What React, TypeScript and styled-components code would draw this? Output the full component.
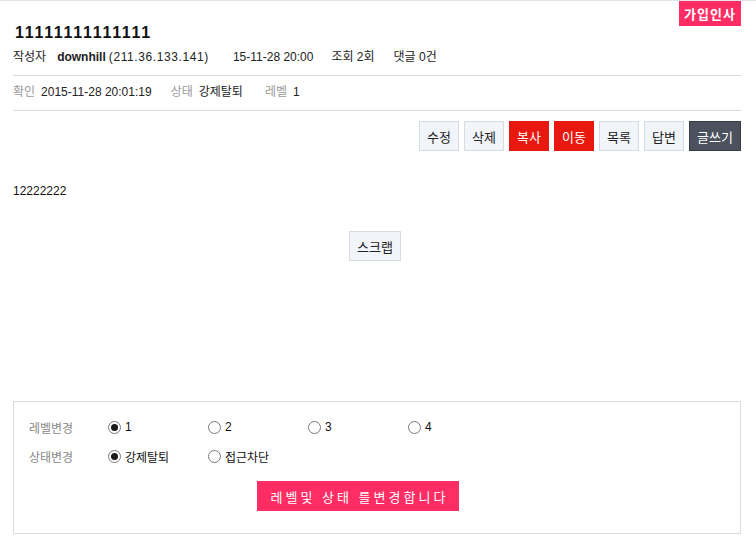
import React from "react";
import styled, { createGlobalStyle } from "styled-components";

const Global = createGlobalStyle`
  html, body { margin: 0; padding: 0; background: #fff; }
  body {
    font-family: "Liberation Sans", "Noto Sans CJK KR", sans-serif;
    font-size: 12px;
    color: #222;
  }
`;

const Page = styled.div`
  border-top: 1px solid #dfe5ec;
  padding: 0 15px 0 13px;
`;

const Header = styled.header`
  position: relative;
  padding: 22px 0 10px;
  border-bottom: 1px solid #dcdcdc;
`;

const Badge = styled.span`
  position: absolute;
  top: 0;
  right: 0;
  width: 62px;
  height: 25px;
  background: #ff2d64;
  color: #fff;
  font-weight: bold;
  font-size: 13px;
  letter-spacing: 1px;
  display: flex;
  align-items: center;
  justify-content: center;
`;

const Title = styled.h1`
  margin: 0 0 6px 2px;
  font-size: 16px;
  line-height: 20px;
  font-weight: bold;
  letter-spacing: 1.7px;
  color: #111;
`;

const MetaLine = styled.div`
  display: flex;
  align-items: center;
  line-height: 16px;
  font-size: 12px;
`;

const MetaItem = styled.span<{ $gap?: number }>`
  margin-right: ${(p) => p.$gap ?? 24}px;
  white-space: nowrap;
  color: #222;
`;

const Strong = styled.b`
  margin: 0 3px 0 11px;
  font-weight: bold;
`;

const Ip = styled.span`
  letter-spacing: 0.6px;
`;

const InfoRow = styled.div`
  display: flex;
  align-items: center;
  line-height: 16px;
  padding: 8px 0 10px;
  border-bottom: 1px solid #dcdcdc;
`;

const InfoLabel = styled.span`
  color: #999;
  margin-right: 6px;
`;

const InfoValue = styled.span<{ $gap?: number }>`
  color: #222;
  margin-right: ${(p) => p.$gap ?? 20}px;
`;

const Toolbar = styled.div`
  display: flex;
  justify-content: flex-end;
  gap: 5px;
  margin-top: 10px;
`;

type Variant = "light" | "red" | "dark";

const Btn = styled.button<{ $variant?: Variant; $w?: number }>`
  height: 30px;
  width: ${(p) => p.$w ?? 40}px;
  padding: 0;
  font-family: inherit;
  font-size: 13px;
  box-sizing: border-box;
  cursor: pointer;
  border: 1px solid
    ${(p) =>
      p.$variant === "red" ? "#e8180e" : p.$variant === "dark" ? "#393e45" : "#d8dcde"};
  background: ${(p) =>
    p.$variant === "red" ? "#e8180e" : p.$variant === "dark" ? "#4b525d" : "#f1f4f8"};
  color: ${(p) => (p.$variant === "light" || !p.$variant ? "#222" : "#fff")};
`;

const Body = styled.div`
  margin-top: 32px;
  line-height: 16px;
  font-size: 12px;
  color: #111;
`;

const ScrapWrap = styled.div`
  display: flex;
  justify-content: center;
  margin-top: 32px;
  padding-right: 4px;
`;

const Box = styled.div`
  margin-top: 140px;
  border: 1px solid #dcdcdc;
  padding: 15px 15px 22px;
  box-sizing: border-box;
`;

const FormRow = styled.div<{ $mt?: number }>`
  display: flex;
  align-items: center;
  height: 20px;
  margin-top: ${(p) => p.$mt ?? 0}px;
`;

const FormLabel = styled.span`
  width: 79px;
  color: #888;
  font-size: 12px;
`;

const Option = styled.label<{ $w?: number }>`
  display: flex;
  align-items: center;
  width: ${(p) => p.$w ?? 100}px;
  font-size: 12px;
  color: #111;
  cursor: pointer;
`;

const Radio = styled.input.attrs({ type: "radio" })`
  appearance: none;
  margin: 0 4px 0 0;
  width: 13px;
  height: 13px;
  border: 1px solid #7a7a7a;
  border-radius: 50%;
  box-sizing: border-box;
  background: #fff;
  display: grid;
  place-items: center;
  &:checked::after {
    content: "";
    width: 7px;
    height: 7px;
    border-radius: 50%;
    background: #1a1a1a;
  }
`;

const SubmitRow = styled.div`
  margin-top: 15px;
  padding-left: 228px;
`;

const Submit = styled.button`
  width: 202px;
  height: 30px;
  border: 0;
  padding: 0 0 0 3px;
  background: #ff2d64;
  color: #fff;
  font-family: inherit;
  font-size: 13px;
  letter-spacing: 3px;
  white-space: nowrap;
  cursor: pointer;
`;

export default function App() {
  return (
    <Page>
      <Global />
      <Header>
        <Badge>가입인사</Badge>
        <Title>11111111111111</Title>
        <MetaLine>
          <MetaItem $gap={24}>
            작성자<Strong>downhill</Strong>
            <Ip>(211.36.133.141)</Ip>
          </MetaItem>
          <MetaItem $gap={18}>15-11-28 20:00</MetaItem>
          <MetaItem $gap={19}>조회 2회</MetaItem>
          <MetaItem>댓글 0건</MetaItem>
        </MetaLine>
      </Header>
      <InfoRow>
        <InfoLabel>확인</InfoLabel>
        <InfoValue $gap={19}>2015-11-28 20:01:19</InfoValue>
        <InfoLabel>상태</InfoLabel>
        <InfoValue $gap={22}>강제탈퇴</InfoValue>
        <InfoLabel>레벨</InfoLabel>
        <InfoValue>1</InfoValue>
      </InfoRow>
      <Toolbar>
        <Btn>수정</Btn>
        <Btn>삭제</Btn>
        <Btn $variant="red">복사</Btn>
        <Btn $variant="red">이동</Btn>
        <Btn>목록</Btn>
        <Btn>답변</Btn>
        <Btn $variant="dark" $w={52}>글쓰기</Btn>
      </Toolbar>
      <Body>12222222</Body>
      <ScrapWrap>
        <Btn $w={52}>스크랩</Btn>
      </ScrapWrap>
      <Box>
        <FormRow>
          <FormLabel>레벨변경</FormLabel>
          {["1", "2", "3", "4"].map((v) => (
            <Option key={v}>
              <Radio name="level" defaultChecked={v === "1"} />
              {v}
            </Option>
          ))}
        </FormRow>
        <FormRow $mt={9}>
          <FormLabel>상태변경</FormLabel>
          <Option>
            <Radio name="state" defaultChecked />
            강제탈퇴
          </Option>
          <Option>
            <Radio name="state" />
            접근차단
          </Option>
        </FormRow>
        <SubmitRow>
          <Submit>레벨및 상태 를변경합니다</Submit>
        </SubmitRow>
      </Box>
    </Page>
  );
}
